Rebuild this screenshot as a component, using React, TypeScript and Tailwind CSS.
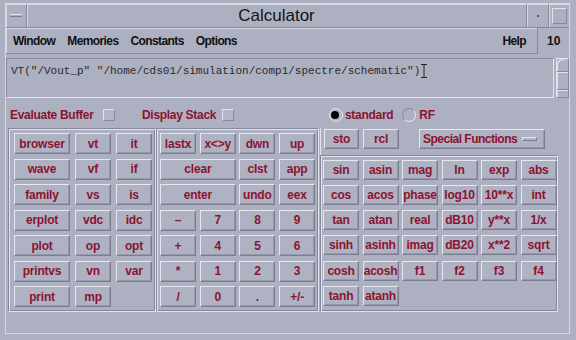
import React from "react";

function Btn({ label, className = "" }: { label: string; className?: string }) {
  return (
    <div
      className={`flex items-center justify-center whitespace-nowrap overflow-visible font-bold text-[12px] leading-none tracking-[-0.2px] text-[#8a1430] bg-[#afb2c3] border border-t-[#e6e8f0] border-l-[#e6e8f0] border-r-[#7a7d8f] border-b-[#7a7d8f] shadow-[inset_-1px_-1px_0_#9699ab] ${className}`}
    >
      {label}
    </div>
  );
}

const etched =
  "border border-t-[#85889a] border-l-[#85889a] border-r-[#e2e4ec] border-b-[#e2e4ec] shadow-[inset_1px_1px_0_#e2e4ec,inset_-1px_-1px_0_#85889a]";

export default function App() {
  const left: [string, string, string | null][] = [
    ["browser", "vt", "it"],
    ["wave", "vf", "if"],
    ["family", "vs", "is"],
    ["erplot", "vdc", "idc"],
    ["plot", "op", "opt"],
    ["printvs", "vn", "var"],
    ["print", "mp", null],
  ];
  const mid: { l: string; span?: boolean }[] = [
    { l: "lastx" }, { l: "x<>y" }, { l: "dwn" }, { l: "up" },
    { l: "clear", span: true }, { l: "clst" }, { l: "app" },
    { l: "enter", span: true }, { l: "undo" }, { l: "eex" },
    { l: "–" }, { l: "7" }, { l: "8" }, { l: "9" },
    { l: "+" }, { l: "4" }, { l: "5" }, { l: "6" },
    { l: "*" }, { l: "1" }, { l: "2" }, { l: "3" },
    { l: "/" }, { l: "0" }, { l: "." }, { l: "+/-" },
  ];
  const fns = [
    "sin", "asin", "mag", "ln", "exp", "abs",
    "cos", "acos", "phase", "log10", "10**x", "int",
    "tan", "atan", "real", "dB10", "y**x", "1/x",
    "sinh", "asinh", "imag", "dB20", "x**2", "sqrt",
    "cosh", "acosh", "f1", "f2", "f3", "f4",
    "tanh", "atanh",
  ];

  return (
    <div className="w-[576px] h-[340px] overflow-hidden bg-[#adb0c1] pt-[3px] pl-[5px] pr-[6px] font-['Liberation_Sans',Arial,sans-serif]">
      <div className="h-[331px] border-l border-r border-b border-[#d6d8e2] flex flex-col">
        {/* Title bar */}
        <div className="h-[25px] flex border-t border-b border-t-[#d6d8e2] border-b-[#85889a]">
          <div className="w-[21px] border-r border-[#85889a] flex items-center justify-center shadow-[inset_1px_1px_0_#d6d8e2]">
            <div className="w-[12px] h-[3px] border-t border-b border-t-[#e6e8f0] border-b-[#7a7d8f]" />
          </div>
          <div className="flex-1 flex items-center justify-center text-[17px] text-[#141414] shadow-[inset_1px_1px_0_#d6d8e2]">
            Calculator
          </div>
          <div className="w-[22px] border-l border-[#85889a] flex items-center justify-center shadow-[inset_1px_1px_0_#d6d8e2]">
            <div className="w-[2px] h-[2px] bg-[#50535f]" />
          </div>
          <div className="w-[21px] border-l border-[#85889a] flex items-center justify-center shadow-[inset_1px_1px_0_#d6d8e2]">
            <div className="w-[15px] h-[16px] border border-t-[#e2e4ec] border-l-[#e2e4ec] border-r-[#85889a] border-b-[#85889a]" />
          </div>
        </div>

        {/* Menu bar */}
        <div className="h-[26px] flex">
          <div className="w-[532px] flex items-center pl-[7px] pr-[11px] gap-[12px] text-[12px] font-bold tracking-[-0.6px] text-[#111] border-r border-b border-r-[#85889a] border-b-[#85889a] shadow-[inset_1px_1px_0_#d6d8e2]">
            <span>Window</span>
            <span>Memories</span>
            <span>Constants</span>
            <span>Options</span>
            <span className="ml-auto">Help</span>
          </div>
          <div className="flex-1 flex items-center pl-[9px] text-[12px] font-bold text-[#111]">10</div>
        </div>

        {/* Text field */}
        <div className="mt-[4px] h-[40px] flex">
          <div className="w-[549px] border border-t-[#85889a] border-l-[#85889a] border-r-[#e2e4ec] border-b-[#e2e4ec] pl-[4px] pt-[5px]">
            <div className="flex items-center font-['Liberation_Mono',monospace] text-[11px] leading-[14px] text-[#2a2a2a]">
              <span className="whitespace-pre">VT("/Vout_p" "/home/cds01/simulation/comp1/spectre/schematic")</span>
              <svg width="6" height="14" viewBox="0 0 6 14" className="ml-[1px]">
                <path d="M0 0.5H6M3 0.5V13.5M0 13.5H6" stroke="#222" strokeWidth="1" fill="none" />
              </svg>
            </div>
          </div>
          <div className="ml-[2px] w-[13px] border border-t-[#e2e4ec] border-l-[#e2e4ec] border-r-[#85889a] border-b-[#85889a] flex flex-col">
            <div className="h-[13px] border-b border-[#85889a] rounded-t-[6px] shadow-[inset_1px_1px_0_#e2e4ec]" />
            <div className="flex-1 border-b border-[#85889a] shadow-[inset_1px_1px_0_#e2e4ec]" />
            <div className="h-[7px] shadow-[inset_1px_1px_0_#e2e4ec]" />
          </div>
        </div>

        {/* Controls row */}
        <div className="h-[30px] pt-[4px] flex items-center text-[12px] font-bold text-[#8a1430] tracking-[-0.3px]">
          <div className="w-[136px] flex items-center pl-[4px]">
            <span>Evaluate Buffer</span>
            <span className="ml-[9px] w-[12px] h-[12px] border border-t-[#e2e4ec] border-l-[#e2e4ec] border-r-[#85889a] border-b-[#85889a] bg-[#b4b7c7]" />
          </div>
          <div className="w-[187px] flex items-center">
            <span>Display Stack</span>
            <span className="ml-[6px] w-[12px] h-[12px] border border-t-[#e2e4ec] border-l-[#e2e4ec] border-r-[#85889a] border-b-[#85889a] bg-[#b4b7c7]" />
          </div>
          <div className="flex items-center">
            <span className="relative w-[14px] h-[14px] rounded-full border border-[#dfe1ea] bg-[#b4b7c7]">
              <span className="absolute left-[1px] top-[2px] w-[8px] h-[8px] rounded-full bg-black" />
            </span>
            <span className="ml-[2px]">standard</span>
            <span className="ml-[9px] w-[14px] h-[14px] rounded-full border border-t-[#85889a] border-l-[#85889a] border-r-[#e2e4ec] border-b-[#e2e4ec]" />
            <span className="ml-[3px]">RF</span>
          </div>
        </div>

        {/* Panels */}
        <div className="h-[184px] flex">
          <div className={`ml-[2px] w-[148px] ${etched} pl-[5px] pt-[4px]`}>
            <div className="grid grid-cols-[56px_36px_36px] gap-x-[5px] auto-rows-[21px] gap-y-[4.5px]">
              {left.map((r, i) => (
                <React.Fragment key={i}>
                  <Btn label={r[0]} />
                  <Btn label={r[1]} />
                  {r[2] ? <Btn label={r[2]} /> : <div />}
                </React.Fragment>
              ))}
            </div>
          </div>
          <div className={`w-[163px] ${etched} pl-[3px] pt-[4px]`}>
            <div className="grid grid-cols-[repeat(4,36px)] gap-x-[3.7px] auto-rows-[21px] gap-y-[4.5px]">
              {mid.map((b, i) => (
                <Btn key={i} label={b.l} className={b.span ? "col-span-2" : ""} />
              ))}
            </div>
          </div>
          <div className="ml-[1px] w-[238px] flex flex-col">
            <div className="h-[27px] flex items-start pt-[1px] pl-[3px] border-l border-[#e2e4ec]">
              <Btn label="sto" className="w-[35px] h-[20px]" />
              <Btn label="rcl" className="ml-[4px] w-[36px] h-[20px]" />
              <div className="ml-[20px] w-[126px] h-[20px] flex items-center pl-[3px] whitespace-nowrap font-bold text-[12px] leading-none tracking-[-0.5px] text-[#8a1430] bg-[#afb2c3] border border-t-[#e6e8f0] border-l-[#e6e8f0] border-r-[#7a7d8f] border-b-[#7a7d8f] shadow-[inset_-1px_-1px_0_#9699ab]">
                <span>Special Functions</span>
                <span className="ml-[5px] w-[15px] h-[4px] border border-t-[#e6e8f0] border-l-[#e6e8f0] border-r-[#7a7d8f] border-b-[#7a7d8f]" />
              </div>
            </div>
            <div className={`flex-1 ${etched} pl-[2px] pt-[3.5px]`}>
              <div className="grid grid-cols-[repeat(6,36px)] gap-x-[3.5px] auto-rows-[20px] gap-y-[5.3px]">
                {fns.map((f) => (
                  <Btn key={f} label={f} />
                ))}
              </div>
            </div>
          </div>
        </div>
        <div className="flex-1" />
      </div>
    </div>
  );
}
